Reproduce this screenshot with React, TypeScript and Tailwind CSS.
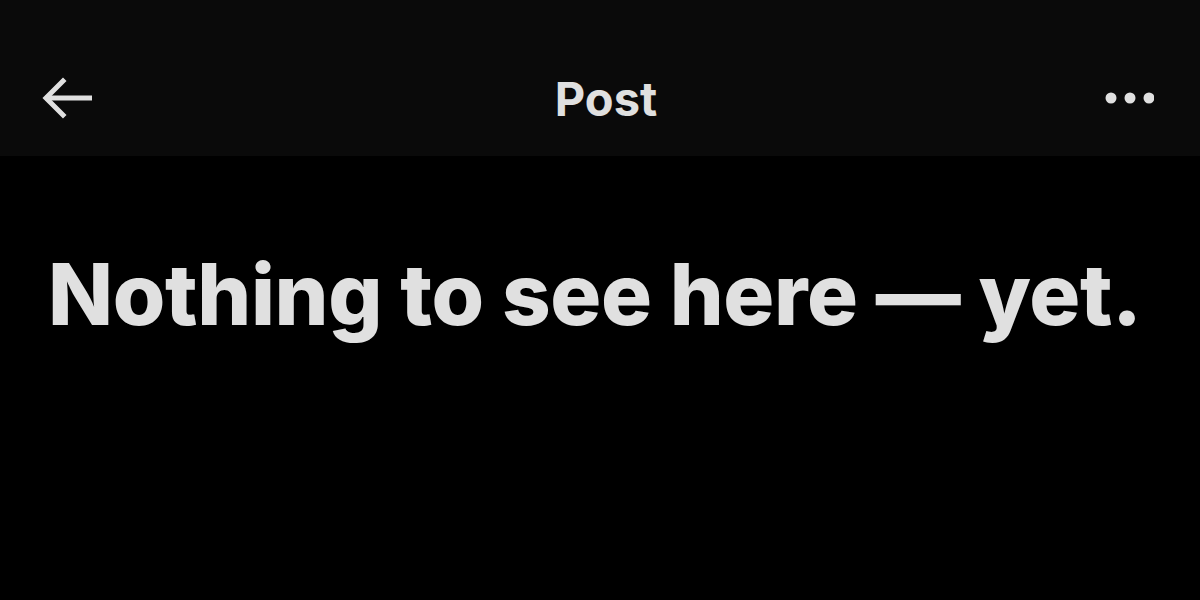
export default function App() {
  return (
    <div className="w-[1200px] h-[600px] bg-black text-[#e0e0e0] font-['Inter',sans-serif] overflow-hidden">
      {/* Top bar */}
      <div className="h-[156px] bg-[#0a0a0a] grid grid-cols-[1fr_auto_1fr] items-center pl-[42px] pr-[46px] pt-[40px]">
        <svg width="50" height="42" viewBox="0 0 50 42" fill="none" stroke="currentColor" strokeWidth="5" strokeLinecap="square">
          <path d="M48 21H6" />
          <path d="M21 4L4 21L21 38" />
        </svg>
        <div className="text-[47px] font-bold leading-none ml-[16px]">Post</div>
        <svg className="justify-self-end" width="50" height="14" viewBox="0 0 50 14" fill="currentColor">
          <circle cx="7" cy="7" r="5.5" />
          <circle cx="26" cy="7" r="5.5" />
          <circle cx="45" cy="7" r="5.5" />
        </svg>
      </div>

      {/* Empty state */}
      <div className="pl-[48px] pt-[96px]">
        <h1 className="text-[85px] leading-none font-extrabold tracking-[-0.4px] whitespace-nowrap">
          Nothing to see here — yet.
        </h1>
      </div>
    </div>
  );
}
